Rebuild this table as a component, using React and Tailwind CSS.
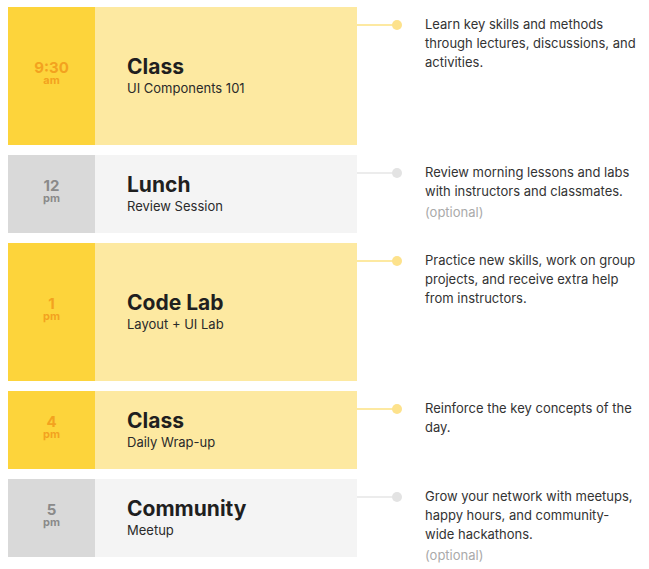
const events = [
    {
        time: "9:30",
        period: "am",
        title: "Class",
        subtitle: "UI Components 101",
        text: "Learn key skills and methods through lectures, discussions, and activities.",
        tall: true,
        accent: true,
    },
    {
        time: "12",
        period: "pm",
        title: "Lunch",
        subtitle: "Review Session",
        text: "Review morning lessons and labs with instructors and classmates.",
        optional: true,
    },
    {
        time: "1",
        period: "pm",
        title: "Code Lab",
        subtitle: "Layout + UI Lab",
        text: "Practice new skills, work on group projects, and receive extra help from instructors.",
        tall: true,
        accent: true,
    },
    {
        time: "4",
        period: "pm",
        title: "Class",
        subtitle: "Daily Wrap-up",
        text: "Reinforce the key concepts of the day.",
        accent: true,
    },
    {
        time: "5",
        period: "pm",
        title: "Community",
        subtitle: "Meetup",
        text: "Grow your network with meetups, happy hours, and community-wide hackathons.",
        optional: true,
    },
];

const ScheduleRow = ({ event }) => {
    const { accent, tall } = event;

    return (
        <div className="flex items-start">
            <div
                className={`flex w-[349px] shrink-0 ${tall ? "h-[138px]" : "h-[78px]"} ${
                    accent ? "bg-[#fde9a1]" : "bg-[#f4f4f4]"
                }`}
            >
                <div
                    className={`flex w-[87px] shrink-0 flex-col items-center justify-center pb-[6px] font-bold ${
                        accent ? "bg-[#fdd43b] text-[#f3a21f]" : "bg-[#d9d9d9] text-[#8a8a8a]"
                    }`}
                >
                    <span className="text-[15px] leading-[15px]">{event.time}</span>
                    <span className="text-[11px] leading-[11px]">{event.period}</span>
                </div>
                <div className="flex flex-col justify-center pl-[32px]">
                    <h3 className="text-[21px] font-bold leading-[24px] text-[#1f1f1f]">{event.title}</h3>
                    <p className="text-[13px] leading-[18px] text-[#2a2a2a]">{event.subtitle}</p>
                </div>
            </div>

            <div className="mt-[13px] flex h-[10px] w-[45px] shrink-0 items-center">
                <div className={`h-[2px] flex-1 ${accent ? "bg-[#fde9a1]" : "bg-[#ececec]"}`} />
                <div className={`h-[10px] w-[10px] -ml-[2px] rounded-full ${accent ? "bg-[#fde28c]" : "bg-[#e3e3e3]"}`} />
            </div>

            <div className="ml-[23px] w-[212px] pt-[8px] text-[13px] leading-[19px] text-[#333]">
                <p>{event.text}</p>
                {event.optional && <p className="mt-[2px] text-[#aaa]">(optional)</p>}
            </div>
        </div>
    );
};

export default function App() {
    return (
        <div
            className="flex min-h-[569px] w-[649px] flex-col gap-[10px] bg-white px-[8px] pt-[7px]"
            style={{ fontFamily: "Inter, 'Liberation Sans', sans-serif" }}
        >
            {events.map((event, i) => (
                <ScheduleRow key={i} event={event} />
            ))}
        </div>
    );
}
